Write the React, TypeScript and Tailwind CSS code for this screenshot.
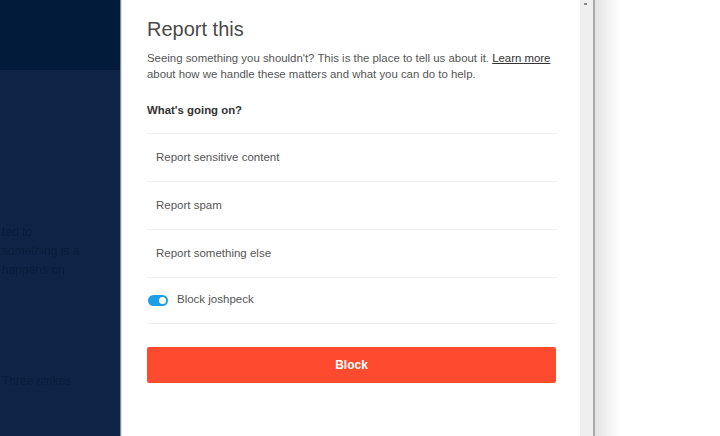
const rows = ["Report sensitive content", "Report spam", "Report something else"];

export default function App() {
  return (
    <div
      className="flex h-[436px] w-[720px] overflow-hidden bg-white"
      style={{ fontFamily: '"Liberation Sans", Arial, sans-serif' }}
    >
      {/* Dimmed page behind the sheet */}
      <div className="flex w-[120px] shrink-0 flex-col">
        <div className="h-[70px] bg-[#031b3b]" />
        <div className="flex flex-1 flex-col bg-[#0e2446] pl-[2px] text-[12px] leading-[19px] text-[#0a1d3a] whitespace-nowrap">
          <div className="mt-[153px] blur-[0.7px]">ted to</div>
          <div className="blur-[0.7px]">something is a</div>
          <div className="blur-[0.7px]">happens on</div>
          <div className="mt-[92px] blur-[0.7px]">Three strikes</div>
        </div>
      </div>
      <div className="w-[1px] shrink-0 bg-[#7d8796]" />
      <div className="w-[1px] shrink-0 bg-[#dfe2e6]" />

      {/* Report sheet */}
      <div className="flex w-[458px] shrink-0 flex-col bg-white pl-[25px] pr-[23px] pt-[17px]">
        <h1 className="text-[20px] leading-[24px] text-[#4a4a4a]">Report this</h1>
        <p className="mt-[9px] text-[11.4px] leading-[16px] text-[#555]">
          Seeing something you shouldn't? This is the place to tell us about it.{" "}
          <span className="underline text-[#333]">Learn more</span> about how we handle these matters and what you can do to help.
        </p>
        <div className="mt-[20px] text-[11.4px] font-bold leading-[16px] text-[#333]">What's going on?</div>
        <div className="mt-[15px] border-t border-[#eeeeee]">
          {rows.map((r) => (
            <div key={r} className="flex h-[48px] items-center border-b border-[#eeeeee] pl-[9px] text-[11.5px] text-[#555]">
              {r}
            </div>
          ))}
          <div className="flex h-[46px] items-center gap-[9px] border-b border-[#eeeeee] pl-[1px] text-[11.5px] text-[#555]">
            <span className="relative flex h-[11px] w-[20px] items-center rounded-full bg-[#1d9ee8]">
              <span className="absolute right-[2px] h-[7px] w-[7px] rounded-full bg-white" />
            </span>
            <span className="-mt-[2px]">Block joshpeck</span>
          </div>
        </div>
        <button className="mt-[23px] h-[36px] w-[409px] rounded-[2px] bg-[#fe4a2f] text-[12px] font-bold text-white">
          Block
        </button>
      </div>

      {/* Scrollbar */}
      <div className="relative w-[13px] shrink-0 bg-[#efefef]">
        <span className="absolute left-[4px] top-[3px] h-[2px] w-[3px] bg-[#888]" />
      </div>
      <div className="w-[2px] shrink-0 bg-[#a9a9a9]" />

      {/* Shadow falling onto the right */}
      <div className="w-[26px] shrink-0 bg-gradient-to-r from-[#e2e2e2] via-[#f3f3f3] to-white" />
      <div className="flex-1 bg-white" />
    </div>
  );
}
